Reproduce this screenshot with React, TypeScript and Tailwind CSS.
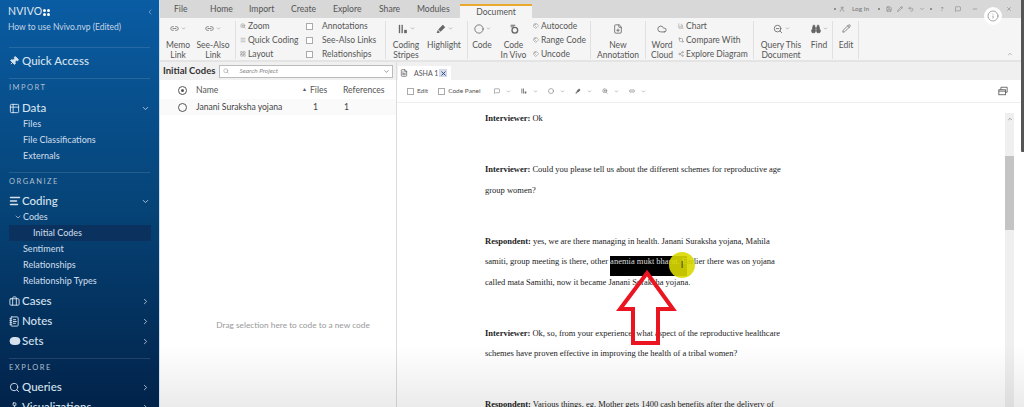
import React from "react";
import { Pin, Table2, AlignLeft, Briefcase, NotebookText, ToggleLeft, Search, Network, ChevronDown, ChevronRight, ChevronLeft, ChevronUp, Link2, Circle, ZoomIn, ZoomOut, FileText, FilePlus, Cloud, Binoculars, Pencil, BarChart3, X, User, Save, Undo2, MessageSquare, Minus, Info, Menu, LayoutGrid, Tags, GitCompare, Share2 } from "lucide-react";

const Stripes = ({ s }: { s: number }) => (
  <svg width={s} height={s} viewBox="0 0 12 12" fill="currentColor">
    <rect x="1" y="1" width="1.6" height="10" /><rect x="4.2" y="1" width="1.6" height="10" /><rect x="7.4" y="7" width="3.2" height="4" />
  </svg>
);
const Marker = ({ s }: { s: number }) => (
  <svg width={s} height={s} viewBox="0 0 12 12" fill="currentColor">
    <path d="M8.2 1 L11 3.8 L5.5 9.3 L2.7 6.5 Z" /><path d="M2.2 7.3 L4.7 9.8 L3 10.8 L0.8 10.8 Z" />
  </svg>
);
const VivoDoc = ({ s }: { s: number }) => (
  <svg width={s} height={s} viewBox="0 0 12 12" fill="none" stroke="currentColor" strokeWidth="1.2">
    <path d="M2 1.5 H7.5 M2 3.5 H6" /><circle cx="7" cy="7.5" r="3.4" strokeWidth="1.6" />
  </svg>
);
const Restore = ({ s }: { s: number }) => (
  <svg width={s} height={s} viewBox="0 0 12 12" fill="none" stroke="currentColor" strokeWidth="1">
    <rect x="1" y="4.5" width="8" height="6" /><path d="M1 6.2 H9" /><path d="M3.5 4.5 V1.5 H11 V7.5 H9" />
  </svg>
);

const Sub = ({ t, sel, chev }: { t: string; sel?: boolean; chev?: boolean }) => (
  <div className={`h-4 flex items-center text-[9px] font-medium text-[#c5d6e6] ${sel ? "bg-[#0b325e] ml-[9px] mr-2 pl-[24px]" : chev ? "pl-[14px]" : "pl-[23px]"}`}>
    {chev && <ChevronDown size={8} className="mr-[1px]" />}
    {t}
  </div>
);
const Main = ({ icon, t, chev }: { icon: React.ReactNode; t: string; chev?: "d" | "r" }) => (
  <div className="h-5 flex items-center pl-[9px] pr-[9px] text-[11.5px] font-medium text-[#d5e2ee]">
    <span className="w-[13px] flex justify-start">{icon}</span>
    <span className="flex-1">{t}</span>
    {chev === "d" && <ChevronDown size={9} />}
    {chev === "r" && <ChevronRight size={9} />}
  </div>
);
const Head = ({ t, m }: { t: string; m: string }) => (
  <div className={`h-[19px] mx-[9px] border-t border-[#ffffff1f] flex items-center text-[7.5px] tracking-[0.2em] text-[#aebfd0] ${m}`}>{t}</div>
);

const Big = ({ icon, l1, l2, w, chev }: { icon: React.ReactNode; l1: string; l2?: string; w: string; chev?: boolean }) => (
  <div className={`${w} h-full flex flex-col items-center shrink-0`}>
    <div className="h-[19px] shrink-0 flex items-center text-[#666]">{icon}{chev && <ChevronDown size={5} className="ml-[2px]" />}</div>
    <div className="text-[8.5px] leading-[10px] text-[#555] text-center mt-[2px] whitespace-nowrap">{l1}{l2 && <br />}{l2}</div>
  </div>
);
const Col = ({ w, iw, items }: { w: string; iw: string; items: [React.ReactNode, string][] }) => (
  <div className={`${w} h-full flex flex-col shrink-0 text-[8.5px] text-[#555]`}>
    {items.map(([ic, t]) => (
      <div key={t} className="h-[14px] shrink-0 flex items-center whitespace-nowrap"><span className={`${iw} flex text-[#888]`}>{ic}</span>{t}</div>
    ))}
  </div>
);
const Sep = ({ m }: { m: string }) => <div className={`w-px h-[38px] mt-[2px] bg-[#e0e0e0] shrink-0 ${m}`} />;
const Box = () => <span className="w-[7px] h-[7px] border border-[#aaa] bg-white block" />;

const T = ({ b, t }: { b: string; t: React.ReactNode }) => (
  <div className="h-[20.4px] flex items-center whitespace-nowrap"><span><b>{b}</b> {t}</span></div>
);
const L = ({ t }: { t: React.ReactNode }) => <div className="h-[20.4px] flex items-center whitespace-nowrap">{t}</div>;
const Gap = () => <div className="h-[30.7px]" />;

const Tool = ({ icon }: { icon: React.ReactNode }) => (
  <span className="flex items-center gap-[6px] text-[#666]">{icon}<ChevronDown size={5} /></span>
);
const Dot = ({ w }: { w: string }) => (
  <span className={`${w} flex justify-center`}><span className="w-[2px] h-[2px] rounded-full bg-[#777]" /></span>
);
const B = ({ w, c }: { w: string; c: React.ReactNode }) => <span className={`${w} flex justify-center`}>{c}</span>;

export default function App() {
  return (
    <div className="relative w-[1024px] h-[407px] overflow-hidden flex bg-white font-['Lato',sans-serif]">
      <aside className="w-[159px] h-full shrink-0 bg-gradient-to-b from-[#0a5ca3] via-[#064478] to-[#02234a] overflow-hidden">
        <div className="h-[47px] pl-[8px] pr-[5px] pt-[7px] text-white">
          <div className="flex items-center justify-between h-[10px]">
            <span className="flex items-center text-[10.5px] tracking-[0.02em] font-normal text-[#e0e8f0]">NVIVO
              <span className="grid grid-cols-2 gap-[1px] ml-[1px]">
                <i className="w-[3px] h-[3px] rounded-full bg-white" /><i className="w-[3px] h-[3px] rounded-full bg-white" />
                <i className="w-[3px] h-[3px] rounded-full bg-white" /><i className="w-[3px] h-[3px] rounded-full bg-white" />
              </span>
            </span>
            <ChevronLeft size={8} className="text-[#9db7d0]" />
          </div>
          <div className="text-[8.5px] mt-[4px] text-[#c5d6e6] whitespace-nowrap">How to use Nvivo.nvp (Edited)</div>
        </div>
        <div className="mx-[9px] border-t border-[#ffffff1f]" />
        <div className="h-[26px] flex items-center pl-[9px] text-[11.5px] font-medium text-[#d5e2ee]">
          <Pin size={10} className="mr-[3px] rotate-45" fill="currentColor" />Quick Access
        </div>
        <Head t="IMPORT" m="mt-[4px] mb-[1px]" />
        <Main icon={<Table2 size={11} />} t="Data" chev="d" />
        <div className="-mt-[2px]">
          <Sub t="Files" /><Sub t="File Classifications" /><Sub t="Externals" />
        </div>
        <Head t="ORGANIZE" m="mt-[8px]" />
        <Main icon={<AlignLeft size={12} strokeWidth={3} />} t="Coding" chev="d" />
        <div className="-mt-[2px]">
          <Sub t="Codes" chev />
          <Sub t="Initial Codes" sel />
          <Sub t="Sentiment" /><Sub t="Relationships" /><Sub t="Relationship Types" />
        </div>
        <div className="h-[2px]" />
        <Main icon={<Briefcase size={11} />} t="Cases" chev="r" />
        <Main icon={<NotebookText size={11} />} t="Notes" chev="r" />
        <Main icon={<ToggleLeft size={12} fill="currentColor" />} t="Sets" chev="r" />
        <Head t="EXPLORE" m="mt-[7px]" />
        <Main icon={<Search size={11} />} t="Queries" chev="r" />
        <Main icon={<Network size={11} />} t="Visualizations" chev="r" />
      </aside>
      <div className="w-[1px] bg-[#cfe0f0] shrink-0" />
      <main className="flex-1 flex flex-col min-w-0 bg-[#f0f0f0]">
        {/* tabs */}
        <div className="h-[18px] bg-[#d8d8d8] flex items-end text-[8.6px] text-[#555] shrink-0 relative">
          <div className="flex h-[18px] items-center pl-[14px]">
            <span className="w-[36px]">File</span>
            <span className="w-[39px]">Home</span>
            <span className="w-[42px]">Import</span>
            <span className="w-[42px]">Create</span>
            <span className="w-[46px]">Explore</span>
            <span className="w-[38px]">Share</span>
            <span className="w-[43px]">Modules</span>
            <span className="w-[72px] h-[14px] mt-[4px] bg-[#f5f5f5] border-t-[2px] border-[#e8a92c] text-center leading-[12px]">Document</span>
          </div>
          <div className="ml-auto mr-[10px] h-[18px] flex items-center text-[6.5px] text-[#777] whitespace-nowrap">
            <Dot w="w-[6px]" />
            <B w="w-[8px]" c={<User size={6} />} />
            <span className="w-[18px] ml-[6px]">Log In</span>
            <Dot w="w-[10px] ml-[4px]" />
            <B w="w-[10px]" c={<Save size={6} />} />
            <B w="w-[10px] ml-[1px]" c={<Pencil size={6} />} />
            <B w="w-[10px] ml-[1px]" c={<Undo2 size={6} />} />
            <B w="w-[10px] ml-[1px]" c={<ChevronDown size={6} />} />
            <Dot w="w-[8px]" />
            <B w="w-[10px] ml-[2px]" c="?" />
            <B w="w-[10px] ml-[6px]" c={<MessageSquare size={6} />} />
            <B w="w-[10px] ml-[7px]" c={<Minus size={6} />} />
            <B w="w-[10px] ml-[24px]" c={<X size={6} />} />
          </div>
        </div>
        {/* ribbon */}
        <div className="h-[44px] bg-[#f5f5f5] flex pl-[5px] pt-[1px] shrink-0 relative border-b-[2px] border-[#e4e4e4] overflow-hidden">
          <Big w="w-[26px]" icon={<Link2 size={9} />} chev l1="Memo" l2="Link" />
          <div className="w-[5px] shrink-0" />
          <Big w="w-[34px]" icon={<Link2 size={9} />} chev l1="See-Also" l2="Link" />
          <Sep m="ml-[5px] mr-[4px]" />
          <Col w="w-[66px]" iw="w-[8px]" items={[[<ZoomIn size={6} />, "Zoom"], [<Menu size={6} />, "Quick Coding"], [<LayoutGrid size={6} />, "Layout"]]} />
          <Col w="w-[79px]" iw="w-[16px]" items={[[<Box />, "Annotations"], [<Box />, "See-Also Links"], [<Box />, "Relationships"]]} />
          <Sep m="mr-[6px]" />
          <Big w="w-[28px]" icon={<Stripes s={10} />} chev l1="Coding" l2="Stripes" />
          <div className="w-[7px] shrink-0" />
          <Big w="w-[34px]" icon={<Marker s={10} />} chev l1="Highlight" />
          <Sep m="ml-[6px] mr-[4px]" />
          <Big w="w-[20px]" icon={<Circle size={10} />} chev l1="Code" />
          <div className="w-[8px] shrink-0" />
          <Big w="w-[27px]" icon={<VivoDoc s={10} />} l1="Code" l2="In Vivo" />
          <div className="w-[6px] shrink-0" />
          <Col w="w-[57px]" iw="w-[8px]" items={[[<Tags size={6} />, "Autocode"], [<Tags size={6} />, "Range Code"], [<Tags size={6} />, "Uncode"]]} />
          <Sep m="mr-[6px]" />
          <Big w="w-[42px]" icon={<FilePlus size={10} />} l1="New" l2="Annotation" />
          <Sep m="ml-[6px] mr-[5px]" />
          <Big w="w-[22px]" icon={<Cloud size={10} />} l1="Word" l2="Cloud" />
          <div className="w-[5px] shrink-0" />
          <Col w="w-[75px]" iw="w-[8px]" items={[[<BarChart3 size={6} />, "Chart"], [<GitCompare size={6} />, "Compare With"], [<Share2 size={6} />, "Explore Diagram"]]} />
          <Sep m="mr-[6px]" />
          <Big w="w-[42px]" icon={<ZoomOut size={10} />} chev l1="Query This" l2="Document" />
          <div className="w-[8px] shrink-0" />
          <Big w="w-[18px]" icon={<Binoculars size={10} fill="currentColor" />} chev l1="Find" />
          <Sep m="ml-[4px] mr-[5px]" />
          <Big w="w-[16px]" icon={<Pencil size={9} />} l1="Edit" />
          <Sep m="ml-[4px]" />
          <ChevronUp size={6} className="absolute right-[11px] bottom-[3px] text-[#777]" />
        </div>
        {/* body */}
        <div className="flex-1 flex min-h-0">
          <section className="w-[237px] shrink-0 flex flex-col border-r border-[#dcdcdc] bg-white">
            <div className="h-[18px] bg-[#f0f0f0] flex items-center pl-[3px] pr-[3px] shrink-0">
              <span className="text-[9.5px] font-bold text-[#333] whitespace-nowrap">Initial Codes</span>
              <div className="ml-[4px] flex-1 h-[13px] bg-white border border-[#bbb] flex items-center pl-[3px] text-[6.5px] italic text-[#888]">
                <Search size={6} className="mr-[10px]" />
                <span className="flex-1">Search Project</span>
                <ChevronDown size={7} className="mr-[2px] text-[#555]" />
              </div>
            </div>
            <div className="h-[18px] flex items-center text-[8.6px] text-[#555] mt-[1px] shrink-0">
              <span className="block w-[9px] h-[9px] rounded-full border border-[#555] p-[2px] ml-[18px] mr-[9px]"><span className="block w-full h-full rounded-full bg-[#555]" /></span>
              <span className="w-[106px]">Name</span>
              <span className="w-[41px] flex items-center"><span className="text-[5px] w-[8px]">▲</span>Files</span>
              <span>References</span>
            </div>
            <div className="h-[16px] bg-[#fafafa] flex items-center text-[8.6px] text-[#444] shrink-0">
              <span className="block w-[9px] h-[9px] rounded-full border border-[#555] ml-[18px] mr-[9px]" />
              <span className="w-[117px] whitespace-nowrap">Janani Suraksha yojana</span>
              <span className="w-[31px]">1</span>
              <span>1</span>
            </div>
            <div className="flex-1 flex items-center justify-center text-[8.3px] text-[#999] pt-[129px] pl-[30px]">Drag selection here to code to a new code</div>
          </section>
          <section className="flex-1 flex flex-col min-w-0">
            <div className="h-[18px] bg-[#f0f0f0] flex items-end pl-[1px] shrink-0">
              <div className="h-[14px] w-[53px] bg-white flex items-center pl-[2px] text-[7px] text-[#555] whitespace-nowrap">
                <FileText size={8} className="mr-[6px]" /><span className="w-[21px]">ASHA 1</span>
                <span className="w-[8px] h-[8px] bg-[#d5dbe8] flex items-center justify-center ml-[4px]"><X size={7} strokeWidth={3} className="text-[#223a7a]" /></span>
              </div>
            </div>
            <div className="h-[23px] bg-white border-b border-[#eee] flex items-center pl-[10px] text-[6.5px] text-[#555] shrink-0">
              <span className="flex items-center gap-[3px] mr-[10px]"><Box />Edit</span>
              <span className="flex items-center gap-[3px] mr-[14px]"><Box />Code Panel</span>
              <span className="flex items-center gap-[10px]">
                <Tool icon={<MessageSquare size={6} />} />
                <Tool icon={<Stripes s={6} />} />
                <Tool icon={<Circle size={6} />} />
                <Tool icon={<Marker s={6} />} />
                <Tool icon={<ZoomIn size={6} />} />
                <Tool icon={<Link2 size={6} />} />
              </span>
              <span className="ml-auto mr-[16px] text-[#555]"><Restore s={10} /></span>
            </div>
            <div className="flex-1 min-h-0 flex bg-white relative overflow-hidden">
              <div className="flex-1 pl-[88px] pt-[5.5px] font-['Liberation_Serif',serif] text-[8.5px] text-[#222]">
                <T b="Interviewer:" t="Ok" />
                <Gap />
                <T b="Interviewer:" t="Could you please tell us about the different schemes for reproductive age" />
                <L t="group women?" />
                <Gap />
                <T b="Respondent:" t="yes, we are there managing in health. Janani Suraksha yojana, Mahila" />
                <L t={<span>samiti, group meeting is there, other <span className="bg-black text-[#ddd] pb-[10px]">anemia mukt bharat. E</span>arlier there was on yojana</span>} />
                <L t="called mata Samithi, now it became Janani Suraksha yojana." />
                <Gap />
                <T b="Interviewer:" t="Ok, so, from your experience, what aspect of the reproductive healthcare" />
                <L t="schemes have proven effective in improving the health of a tribal women?" />
                <Gap />
                <T b="Respondent:" t="Various things, eg. Mother gets 1400 cash benefits after the delivery of" />
              </div>
              <div className="w-[9px] mr-[10px] mt-[10px] bg-[#efefef] flex flex-col items-center shrink-0">
                <ChevronUp size={6} className="text-[#555] mt-[3px] shrink-0" />
                <div className="w-full h-[74px] bg-[#c4c4c4] mt-[34px] shrink-0" />
              </div>
            </div>
          </section>
        </div>
      </main>
      <div className="absolute left-[160px] right-0 bottom-0 h-[62px] bg-gradient-to-b from-transparent to-[#00000014] pointer-events-none" />
      <div className="w-[3px] h-[152px] bg-[#555] rounded-bl-[1px] absolute right-0 top-0" />
      {/* overlays */}
      <div className="absolute left-[669px] top-[252px] w-[26px] h-[26px] rounded-full bg-[#d8d800e6] flex items-center justify-center text-[9px] text-[#333]">I</div>
      <svg className="absolute left-[616px] top-[268px]" width="62" height="80" viewBox="0 0 62 80" fill="none">
        <path d="M31 5 L57 41 H42 V75 H17 V41 H4 Z" stroke="#ea1520" strokeWidth="4" />
      </svg>
      <div className="absolute left-[984px] top-[7px] w-[18px] h-[18px] rounded-full bg-white/95 flex items-center justify-center text-[#888]"><Info size={12} strokeWidth={1.5} /></div>
    </div>
  );
}
